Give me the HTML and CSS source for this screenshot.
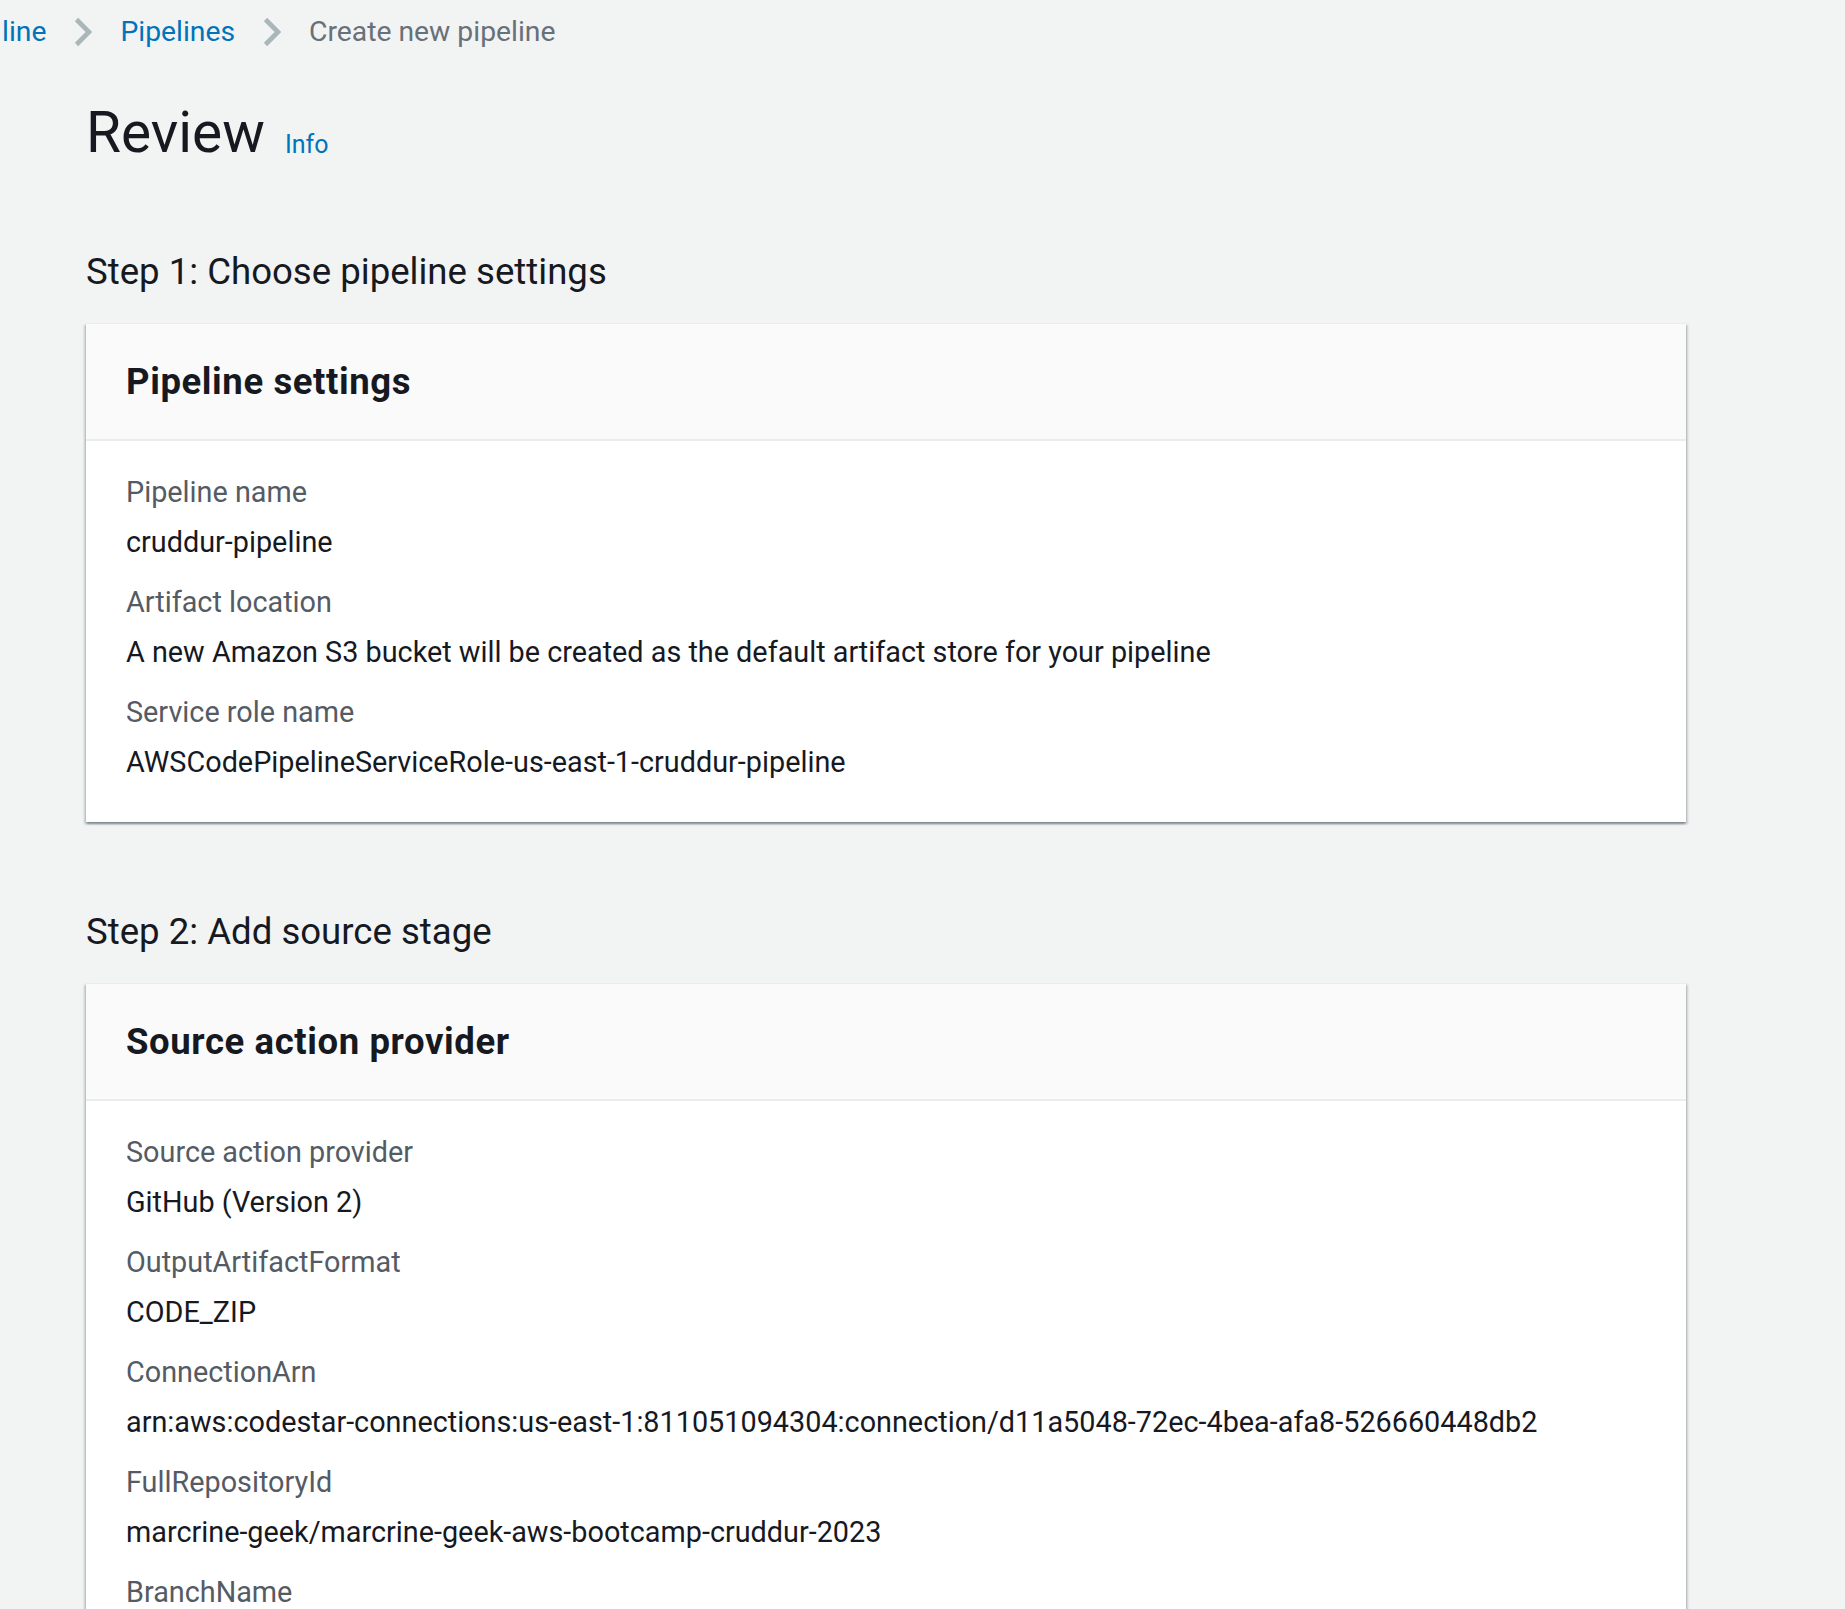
FILE: index.html
```html
<!DOCTYPE html>
<html lang="en">
<head>
<meta charset="utf-8">
<title>Create new pipeline - Review</title>
<link rel="stylesheet" href="styles.css">
</head>
<body>
  <nav class="breadcrumbs">
    <a class="crumb-link crumb-first" href="#">line</a>
    <svg class="chevron" viewBox="0 0 18 30" width="18" height="30" aria-hidden="true"><polyline points="2.5,2.5 15,15 2.5,27.5" fill="none" stroke="#aab7b8" stroke-width="4.6"/></svg>
    <a class="crumb-link" href="#">Pipelines</a>
    <svg class="chevron" viewBox="0 0 18 30" width="18" height="30" aria-hidden="true"><polyline points="2.5,2.5 15,15 2.5,27.5" fill="none" stroke="#aab7b8" stroke-width="4.6"/></svg>
    <span class="crumb-current">Create new pipeline</span>
  </nav>

  <main class="content">
    <header class="page-header">
      <h1 class="page-title">Review</h1>
      <a class="info-link" href="#">Info</a>
    </header>

    <section class="step step-first">
      <h2 class="step-title">Step 1: Choose pipeline settings</h2>
      <div class="panel">
        <div class="panel-header"><h3 class="panel-title">Pipeline settings</h3></div>
        <div class="panel-body">
          <div class="field">
            <div class="field-label">Pipeline name</div>
            <div class="field-value">cruddur-pipeline</div>
          </div>
          <div class="field">
            <div class="field-label">Artifact location</div>
            <div class="field-value">A new Amazon S3 bucket will be created as the default artifact store for your pipeline</div>
          </div>
          <div class="field">
            <div class="field-label">Service role name</div>
            <div class="field-value">AWSCodePipelineServiceRole-us-east-1-cruddur-pipeline</div>
          </div>
        </div>
      </div>
    </section>

    <section class="step">
      <h2 class="step-title">Step 2: Add source stage</h2>
      <div class="panel">
        <div class="panel-header"><h3 class="panel-title">Source action provider</h3></div>
        <div class="panel-body">
          <div class="field">
            <div class="field-label">Source action provider</div>
            <div class="field-value">GitHub (Version 2)</div>
          </div>
          <div class="field">
            <div class="field-label">OutputArtifactFormat</div>
            <div class="field-value">CODE_ZIP</div>
          </div>
          <div class="field">
            <div class="field-label">ConnectionArn</div>
            <div class="field-value">arn:aws:codestar-connections:us-east-1:811051094304:connection/d11a5048-72ec-4bea-afa8-526660448db2</div>
          </div>
          <div class="field">
            <div class="field-label">FullRepositoryId</div>
            <div class="field-value">marcrine-geek/marcrine-geek-aws-bootcamp-cruddur-2023</div>
          </div>
          <div class="field">
            <div class="field-label">BranchName</div>
          </div>
        </div>
      </div>
    </section>
  </main>
</body>
</html>
```
FILE: styles.css
```css
html, body {
  margin: 0;
  padding: 0;
}

body {
  background: #f2f3f3;
  color: #16191f;
  font-family: Roboto, "Liberation Sans", Arial, sans-serif;
  padding-top: 12px;
  overflow: hidden;
}

a {
  text-decoration: none;
}

/* Breadcrumbs */
.breadcrumbs {
  display: flex;
  align-items: center;
  gap: 28px;
  height: 40px;
  padding-left: 2px;
  font-size: 28.3px;
  line-height: 40px;
}

.crumb-link {
  color: #0073bb;
}

.crumb-current {
  color: #687078;
}

.chevron {
  display: block;
  flex: none;
}

/* Main content column */
.content {
  margin-left: 86px;
  width: 1600px;
}

.page-header {
  display: flex;
  align-items: baseline;
  gap: 20px;
  margin-top: 49px;
}

.page-title {
  margin: 0;
  font-size: 56.8px;
  font-weight: 400;
  line-height: 64px;
  color: #16191f;
}

.info-link {
  color: #0073bb;
  font-size: 25px;
  line-height: 32px;
  position: relative;
  top: 1px;
}

.step {
  margin-top: 86.5px;
}

.step-first {
  margin-top: 82.5px;
}

.step-title {
  margin: 0 0 27px 0;
  font-size: 36.6px;
  font-weight: 400;
  line-height: 48px;
  color: #16191f;
}

/* Panels */
.panel {
  background: #ffffff;
  border-top: 1px solid #eaeded;
  box-shadow: 0 2px 2px 0 rgba(0, 28, 36, 0.3),
              2px 2px 2px 0 rgba(0, 28, 36, 0.15),
              -2px 2px 2px 0 rgba(0, 28, 36, 0.15);
}

.panel-header {
  background: #fafafa;
  border-bottom: 2px solid #eaeded;
  padding: 34px 40px 33px 40px;
}

.panel-title {
  margin: 0;
  font-size: 36.5px;
  font-weight: 700;
  letter-spacing: 0.6px;
  line-height: 48px;
  color: #16191f;
}

.panel-body {
  padding: 31px 40px 40px 40px;
  display: flex;
  flex-direction: column;
  gap: 20px;
}

.field {
  display: flex;
  flex-direction: column;
  gap: 10px;
  font-size: 28.8px;
  line-height: 40px;
}

.field-label {
  color: #545b64;
}

.field-value {
  color: #16191f;
}
```
